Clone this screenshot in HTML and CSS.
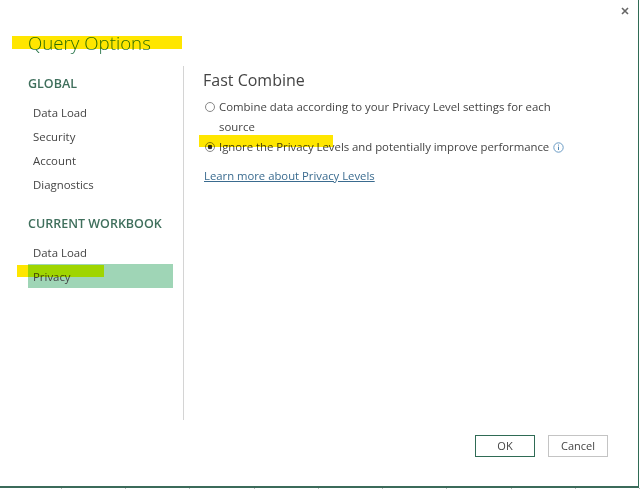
FILE: index.html
```html
<!DOCTYPE html>
<html lang="en">
<head>
<meta charset="utf-8">
<title>Query Options</title>
<link rel="stylesheet" href="styles.css">
</head>
<body>
<div class="dialog">
  <div class="close-row">
    <svg class="close" width="8" height="8" viewBox="0 0 8 8"><path d="M1 1l6 6M7 1L1 7" stroke="#666" stroke-width="1.6" fill="none"/></svg>
  </div>
  <h1 class="title">Query Options</h1>
  <div class="body">
    <nav class="side">
      <h2 class="group">GLOBAL</h2>
      <ul class="items">
        <li class="item">Data Load</li>
        <li class="item">Security</li>
        <li class="item">Account</li>
        <li class="item">Diagnostics</li>
      </ul>
      <h2 class="group group-second">CURRENT WORKBOOK</h2>
      <ul class="items">
        <li class="item">Data Load</li>
        <li class="item item-active">Privacy</li>
      </ul>
    </nav>
    <main class="main">
      <h3 class="heading">Fast Combine</h3>
      <div class="option">
        <span class="radio"></span>
        <span class="label">Combine data according to your Privacy Level settings for each source</span>
      </div>
      <div class="option">
        <span class="radio radio-on"></span>
        <span class="label label-tight">Ignore the Privacy Levels and potentially improve performance
          <svg class="info" width="11" height="11" viewBox="0 0 11 11"><circle cx="5.5" cy="5.5" r="4.7" fill="none" stroke="#6a9bc4"/><path d="M5.5 4.6v3.4M5.5 2.6v1" stroke="#4f86b5" fill="none"/></svg>
        </span>
      </div>
      <a class="link" href="#">Learn more about Privacy Levels</a>
    </main>
  </div>
  <div class="footer">
    <button class="btn btn-ok">OK</button>
    <button class="btn">Cancel</button>
  </div>
  <span class="mark mark-title"></span>
  <span class="mark mark-radio"></span>
  <span class="mark mark-privacy"></span>
</div>
<div class="ticks">
  <span class="tick"></span><span class="tick"></span><span class="tick"></span>
  <span class="tick"></span><span class="tick"></span><span class="tick"></span>
  <span class="tick"></span><span class="tick"></span><span class="tick"></span>
  <span class="tick"></span>
</div>
</body>
</html>
```
FILE: styles.css
```css
* { box-sizing: border-box; }
html, body { margin: 0; padding: 0; background: #fff; }
body {
  width: 640px;
  height: 489px;
  overflow: hidden;
  font-family: "Open Sans", "Noto Sans", sans-serif;
  color: #444;
}
.dialog {
  position: relative;
  width: 639px;
  height: 488px;
  border-right: 1px solid #2f6b55;
  border-bottom: 2px solid #3b6b5a;
  display: flex;
  flex-direction: column;
}
.close-row { height: 29px; padding: 7px 0 0 621px; }
.close { display: block; }
.title {
  margin: 0 0 0 28px;
  height: 37px;
  font-size: 18.7px;
  line-height: 28px;
  font-weight: 300;
  color: #2f7a50;
}
.body { display: flex; height: 354px; }
.side { width: 184px; height: 354px; padding-left: 28px; border-right: 1px solid #d4d4d4; }
.group {
  margin: 0;
  padding-top: 9px;
  height: 35px;
  font-size: 12.5px;
  line-height: 18px;
  font-weight: 600;
  color: #3f6f5c;
  white-space: nowrap;
}
.group-second { margin-top: 9px; }
.items { list-style: none; margin: 0; padding: 0; }
.item {
  height: 24px;
  padding-left: 5px;
  font-size: 11.4px;
  line-height: 24px;
  color: #444;
}
.item-active { width: 145px; margin-top: -1px; line-height: 26px; background: #9fd5b6; }
.main { padding: 3px 0 0 19px; width: 430px; }
.heading { margin: 0 0 6px; font-size: 16px; line-height: 22px; font-weight: 400; color: #444; }
.option { display: flex; align-items: flex-start; width: 368px; font-size: 11.4px; line-height: 20px; }
.radio {
  flex: none;
  width: 10px;
  height: 10px;
  margin: 5px 4px 0 2px;
  border: 1px solid #888;
  border-radius: 50%;
  background: #fff;
}
.radio-on { background: radial-gradient(circle, #333 0 2px, #fff 2.6px); }
.label { flex: 1; }
.label-tight { letter-spacing: -0.03px; }
.info { vertical-align: -2px; margin-left: 1px; }
.link {
  display: block;
  margin-top: 9px;
  margin-left: 1px;
  font-size: 11.3px;
  line-height: 20px;
  color: #3a6b8f;
}
.footer { display: flex; justify-content: flex-end; gap: 13px; padding: 15px 30px 0 0; }
.btn {
  width: 60px;
  height: 22px;
  padding: 0;
  font: 11px/18px "Open Sans", "Noto Sans", sans-serif;
  color: #444;
  background: #fff;
  border: 1px solid #c4c4c4;
}
.btn-ok { border-color: #2f6b55; }
.mark { position: absolute; background: #ffe600; mix-blend-mode: multiply; }
.mark-title { left: 12px; top: 36px; width: 170px; height: 13px; }
.mark-radio { left: 199px; top: 135px; width: 134px; height: 12px; }
.mark-privacy { left: 17px; top: 265px; width: 87px; height: 12px; background: linear-gradient(90deg, #ffe600 0 11px, #ffff00 11px); }
.ticks { display: flex; justify-content: space-between; padding: 0 0 0 61px; width: 640px; gap: 63px; }
.tick { width: 1px; height: 1px; background: #bbb; }
```
